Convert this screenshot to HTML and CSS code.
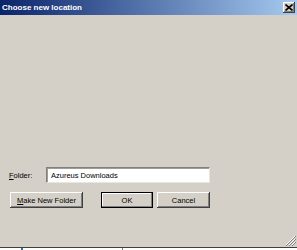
FILE: index.html
```html
<!DOCTYPE html>
<html>
  <head>
    <title>Choose new location</title>
    <meta charset="utf-8" />
    <link rel="stylesheet" href="styles.css">
  </head>
  <body>
    <div class="window">
      <div class="titlebar">
        <span class="title">Choose new location</span>
        <button class="close" aria-label="Close">
          <svg width="8" height="7" viewBox="0 0 8 7">
            <path d="M0.5 0.5 L7.5 6.5 M7.5 0.5 L0.5 6.5" stroke="#000" stroke-width="1.6" />
          </svg>
        </button>
      </div>
      <div class="content">
        <div class="folder-row">
          <label class="label"><u>F</u>older:</label>
          <div class="field">Azureus Downloads</div>
        </div>
        <div class="buttons">
          <button class="btn wide"><u>M</u>ake New Folder</button>
          <button class="btn default">OK</button>
          <button class="btn">Cancel</button>
        </div>
        <svg class="grip" width="11" height="11" viewBox="0 0 11 11">
          <path d="M10 1 L1 10 M10 4 L4 10 M10 7 L7 10" stroke="#fff" stroke-width="1" />
          <path d="M11 1 L1 11 M11 4 L4 11 M11 7 L7 11" stroke="#808080" stroke-width="1" />
        </svg>
      </div>
    </div>
    <div class="strip">
      <span class="mark blue"></span>
      <span class="mark gray"></span>
    </div>
  </body>
</html>
```

FILE: styles.css
```css
html,
body {
  margin: 0;
  padding: 0;
  background: #fff;
  font: 7.5px "Liberation Sans", Arial, sans-serif;
  color: #000;
}
.window {
  width: 297px;
  height: 247px;
  display: flex;
  flex-direction: column;
  background: #d4d0c8;
  border-bottom: 1px solid #404040;
}
.titlebar {
  height: 15px;
  display: flex;
  align-items: center;
  justify-content: space-between;
  padding: 0 2px 0 2px;
  background: linear-gradient(to right, #0a246a, #a6caf0);
}
.title {
  color: #fff;
  font-weight: bold;
  font-size: 8px;
}
.close {
  width: 12px;
  height: 11px;
  padding: 0;
  margin-right: 0;
  display: flex;
  align-items: center;
  justify-content: center;
  background: #d4d0c8;
  border: 0;
  box-shadow: inset -1px -1px #404040, inset 1px 1px #fff, inset -2px -2px #808080;
}
.content {
  flex: 1;
  position: relative;
  display: flex;
  flex-direction: column;
  justify-content: flex-end;
  padding: 0 0 39px 9px;
}
.folder-row {
  display: flex;
  align-items: center;
  height: 16px;
}
.label {
  width: 37px;
}
.field {
  width: 164px;
  height: 16px;
  box-sizing: border-box;
  padding: 0 0 0 4px;
  display: flex;
  align-items: center;
  background: #fff;
  border-top: 1px solid #808080;
  border-left: 1px solid #808080;
  border-right: 1px solid #e8e6e1;
  border-bottom: 1px solid #e8e6e1;
  box-shadow: inset 1px 1px #a09c94;
}
.buttons {
  display: flex;
  margin-top: 9px;
  padding-left: 1px;
}
.btn {
  height: 16px;
  width: 53px;
  padding: 0;
  margin-left: 4px;
  font: inherit;
  color: #000;
  background: #d4d0c8;
  border: 0;
  box-shadow: inset -1px -1px #404040, inset 1px 1px #fff, inset -2px -2px #808080;
}
.btn.wide {
  width: 73px;
  margin-left: 0;
}
.btn.default {
  width: 52px;
  margin-left: 18px;
  box-shadow: inset 0 0 0 1px #000, inset -2px -2px #808080, inset 2px 2px #fff;
}
.grip {
  position: absolute;
  right: 1px;
  bottom: 1px;
}
.strip {
  height: 2px;
  display: flex;
}
.mark {
  height: 2px;
  width: 2px;
}
.mark.blue {
  margin-left: 21px;
  background: #3a6ea5;
}
.mark.gray {
  margin-left: 99px;
  width: 1px;
  background: #808080;
}
```
